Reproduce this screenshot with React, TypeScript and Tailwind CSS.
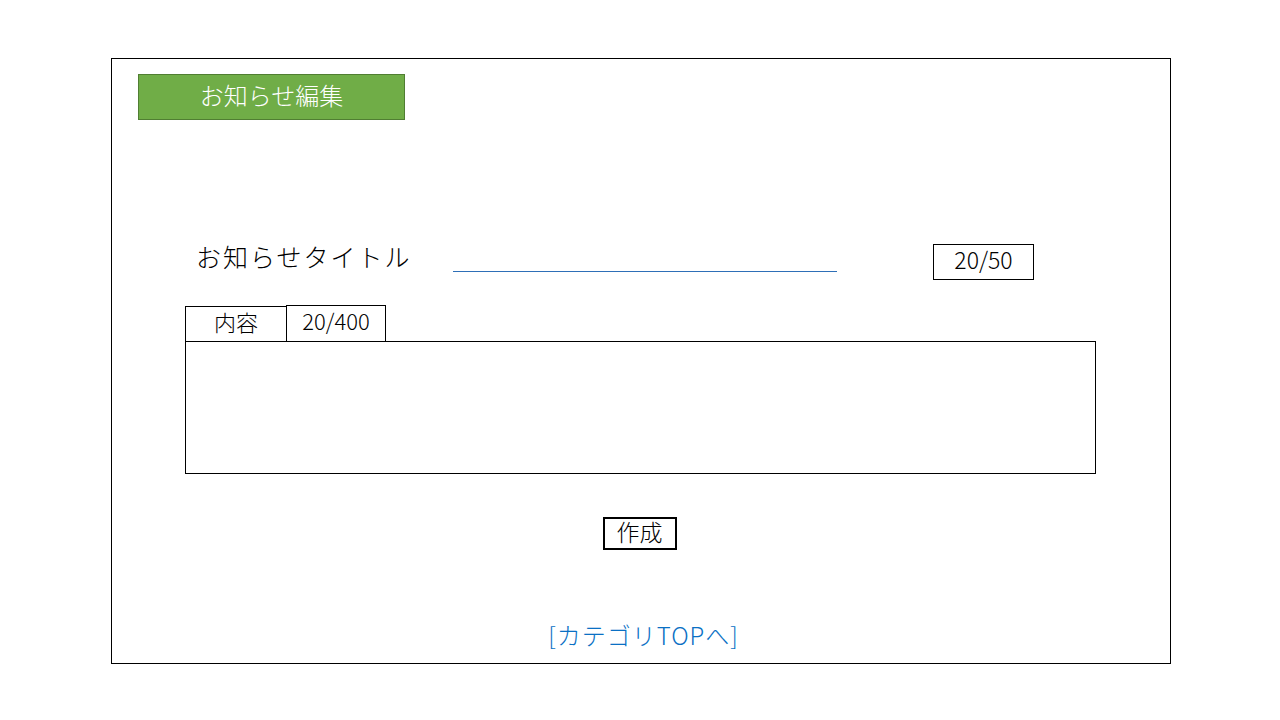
import React from 'react';

const jp = { fontFamily: '"Noto Sans CJK JP", "Noto Sans", sans-serif' };

export default function App() {
  return (
    <div className="w-[1280px] h-[720px] bg-white pt-[58px] pl-[111px]" style={jp}>
      <div className="w-[1060px] h-[606px] border border-black flex flex-col">
        {/* header badge */}
        <div className="ml-[26px] mt-[15px] w-[267px] h-[46px] pb-[4px] bg-[#70ad47] border border-[#507e32] flex items-center justify-center text-white text-[24px] font-light">
          お知らせ編集
        </div>

        {/* title row */}
        <div className="mt-[124px] ml-[84px] flex h-[36px] items-center">
          <div className="w-[257px] mb-[10px] text-[25px] font-light tracking-[2px] text-black">お知らせタイトル</div>
          <div className="self-start mt-[27px] w-[384px] h-px bg-[#2e6fb7]" />
          <div className="w-[96px]" />
          <div className="w-[101px] h-[36px] pb-[5px] border border-black flex items-center justify-center text-[23px] font-light text-black">
            20/50
          </div>
        </div>

        {/* content */}
        <div className="mt-[25px] ml-[73px] flex items-end">
          <div className="w-[102px] h-[36px] pb-[6px] border border-black flex items-center justify-center text-[22px] font-light">
            内容
          </div>
          <div className="-ml-px w-[100px] h-[37px] pb-[6px] border border-black flex items-center justify-center text-[22px] font-light">
            20/400
          </div>
        </div>
        <div className="-mt-px ml-[73px] w-[911px] h-[133px] border border-black" />

        {/* submit */}
        <div className="mt-[43px] flex justify-center">
          <div className="-ml-[3px] w-[74px] h-[33px] pb-[4px] border-2 border-black flex items-center justify-center text-[23px] font-light">
            作成
          </div>
        </div>

        {/* footer link */}
        <div className="mt-auto mb-[10px] flex justify-center">
          <span className="ml-[5px] text-[24px] tracking-[1px] font-light text-[#0a70c4]">[カテゴリTOPへ]</span>
        </div>
      </div>
    </div>
  );
}
